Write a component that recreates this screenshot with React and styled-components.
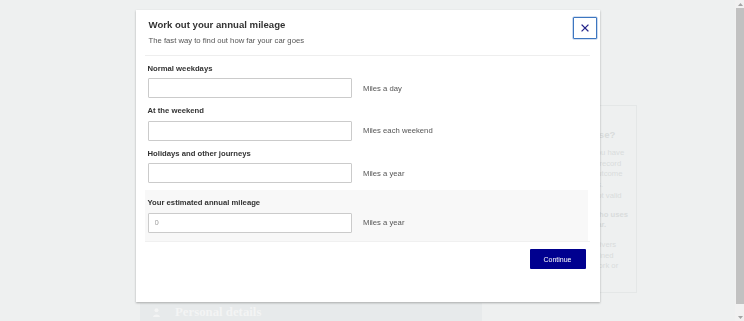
import React from 'react';
import styled, { createGlobalStyle } from 'styled-components';

const GlobalStyle = createGlobalStyle`
  html, body { margin: 0; padding: 0; }
  body {
    background: #eef0f0;
    font-family: "Liberation Sans", Arial, sans-serif;
    overflow: hidden;
  }
  * { box-sizing: border-box; }
`;

/* ---------- background page (behind the dialog) ---------- */

const Page = styled.div`
  display: grid;
  grid-template-columns: 342px 77px;
  column-gap: 78px;
  padding-left: 140px;
  height: 321px;
  overflow: hidden;
`;

const MainColumn = styled.main`
  padding-top: 303px;
`;

const StepBar = styled.div`
  display: flex;
  align-items: center;
  gap: 15px;
  height: 18px;
  padding-left: 13px;
  background: #e7eaeb;
  color: #f3f4f4;
  font-family: "Liberation Serif", "Times New Roman", serif;
  font-weight: 700;
  font-size: 12.8px;
`;

const Sidebar = styled.aside`
  padding-top: 105px;
`;

const InfoCard = styled.div`
  height: 188px;
  border: 1px solid #e4e7e7;
  padding: 22px 4px 0 32px;
  color: #d9dcdc;
  font-size: 7.7px;
  line-height: 10.7px;
  white-space: nowrap;
  overflow: hidden;
`;

const InfoTitle = styled.div`
  font-size: 9.6px;
  font-weight: 700;
  line-height: 13px;
  margin-bottom: 7px;
`;

const InfoPara = styled.p`
  margin: 0 0 ${p => p.$gap || 8}px;
  font-weight: ${p => (p.$strong ? 700 : 400)};
`;

/* ---------- scrollbar ---------- */

const ScrollTrack = styled.div`
  position: fixed;
  top: 0;
  right: 0;
  bottom: 0;
  width: 9px;
  background: #f1f1f1;
  display: flex;
  flex-direction: column;
  align-items: stretch;
`;

const ScrollArrow = styled.div`
  height: 8px;
  display: flex;
  align-items: center;
  justify-content: center;
  padding-left: 1px;
`;

const ScrollThumb = styled.div`
  flex: 1;
  margin: 0 0 9px 1px;
  background: #c1c1c1;
`;

/* ---------- dialog ---------- */

const Overlay = styled.div`
  position: fixed;
  top: 0;
  left: 0;
  right: 9px;
  bottom: 0;
  display: flex;
  justify-content: center;
  align-items: flex-start;
  padding-top: 10px;
`;

const Dialog = styled.div`
  position: relative;
  width: 464px;
  background: #fff;
  box-shadow: 0 1px 2px rgba(0, 0, 0, 0.3);
  padding: 0 10px 33px 9px;
`;

const Header = styled.header`
  padding: 9px 0 9px 4px;
  border-bottom: 1px solid #eeeeee;
`;

const Title = styled.h2`
  margin: 0;
  font-size: 9.6px;
  line-height: 12px;
  font-weight: 700;
  color: #333;
`;

const Subtitle = styled.p`
  margin: 5px 0 0;
  font-size: 7.7px;
  line-height: 10px;
  color: #555;
`;

const CloseButton = styled.button`
  position: absolute;
  top: 7px;
  right: 3px;
  width: 24px;
  height: 22px;
  padding: 0;
  display: flex;
  align-items: center;
  justify-content: center;
  background: #fff;
  border: 1px solid #3d76c0;
  box-shadow: 0 0 0 0.6px rgba(61, 118, 192, 0.45);
  border-radius: 1px;
  cursor: pointer;
`;

const Body = styled.div`
  padding-top: 7.5px;
`;

const FieldGroup = styled.div`
  padding-left: 3px;
  margin-bottom: ${p => (p.$last ? 0 : 8)}px;
`;

const Label = styled.label`
  display: block;
  font-size: 7.7px;
  line-height: 10px;
  font-weight: 700;
  color: #333;
  margin-bottom: 4.5px;
`;

const InputRow = styled.div`
  display: flex;
  align-items: center;
`;

const TextInput = styled.input`
  width: 204px;
  height: 20px;
  border: 1px solid #cbcbcb;
  border-radius: 1px;
  background: #fff;
  padding: 0 6px;
  font-family: inherit;
  font-size: 7.7px;
  color: ${p => (p.$muted ? '#9a9a9a' : '#333')};
  outline: none;
`;

const Suffix = styled.span`
  margin-left: 11.5px;
  font-size: 7.7px;
  color: #555;
`;

const EstimateWrap = styled.div`
  margin-top: 7px;
  border-bottom: 1px solid #f0f0f0;
`;

const EstimateBox = styled.div`
  background: #f8f8f8;
  margin: 0 2px 0 0;
  padding: 8px 0 8px 0;
`;

const Footer = styled.div`
  display: flex;
  justify-content: flex-end;
  padding: 7.5px 4px 0 0;
`;

const PrimaryButton = styled.button`
  width: 56px;
  height: 20px;
  border: none;
  border-radius: 1px;
  background: #00008f;
  color: #fff;
  font-family: inherit;
  font-size: 7px;
  cursor: pointer;
`;

const fields = [
  { label: 'Normal weekdays', suffix: 'Miles a day' },
  { label: 'At the weekend', suffix: 'Miles each weekend' },
  { label: 'Holidays and other journeys', suffix: 'Miles a year' },
];

const PersonIcon = () => (
  <svg width="7" height="9" viewBox="0 0 7 9" fill="currentColor">
    <circle cx="3.5" cy="2.2" r="2" />
    <path d="M0 9 C0 5.6 7 5.6 7 9 Z" />
  </svg>
);

const CloseIcon = () => (
  <svg width="8" height="8" viewBox="0 0 8 8" fill="none" stroke="#24248a" strokeWidth="1.2" strokeLinecap="square">
    <path d="M1 1 L7 7 M7 1 L1 7" />
  </svg>
);

const Arrow = ({ up }) => (
  <svg width="5" height="3" viewBox="0 0 5 3" fill="#a3a3a3">
    <path d={up ? 'M0 3 L2.5 0 L5 3 Z' : 'M0 0 L2.5 3 L5 0 Z'} />
  </svg>
);

export default function App() {
  return (
    <>
      <GlobalStyle />
      <Page>
        <MainColumn>
          <StepBar>
            <PersonIcon />
            <span>Personal details</span>
          </StepBar>
        </MainColumn>
        <Sidebar>
          <InfoCard>
            <InfoTitle>use?</InfoTitle>
            <InfoPara>
              you have<br />
              a record<br />
              outcome<br />
              us.<br />
              not valid
            </InfoPara>
            <InfoPara $strong $gap={9}>
              who uses<br />
              car.
            </InfoPara>
            <InfoPara>
              drivers<br />
              joined<br />
              work or
            </InfoPara>
          </InfoCard>
        </Sidebar>
      </Page>

      <ScrollTrack>
        <ScrollArrow><Arrow up /></ScrollArrow>
        <ScrollThumb />
        <ScrollArrow><Arrow /></ScrollArrow>
      </ScrollTrack>

      <Overlay>
        <Dialog role="dialog" aria-labelledby="mileage-title">
          <Header>
            <Title id="mileage-title">Work out your annual mileage</Title>
            <Subtitle>The fast way to find out how far your car goes</Subtitle>
          </Header>
          <CloseButton aria-label="Close">
            <CloseIcon />
          </CloseButton>
          <Body>
            {fields.map((f, i) => (
              <FieldGroup key={f.label} $last={i === fields.length - 1}>
                <Label>{f.label}</Label>
                <InputRow>
                  <TextInput type="text" />
                  <Suffix>{f.suffix}</Suffix>
                </InputRow>
              </FieldGroup>
            ))}
            <EstimateWrap>
              <EstimateBox>
                <FieldGroup $last>
                  <Label>Your estimated annual mileage</Label>
                  <InputRow>
                    <TextInput type="text" value="0" readOnly $muted />
                    <Suffix>Miles a year</Suffix>
                  </InputRow>
                </FieldGroup>
              </EstimateBox>
            </EstimateWrap>
          </Body>
          <Footer>
            <PrimaryButton>Continue</PrimaryButton>
          </Footer>
        </Dialog>
      </Overlay>
    </>
  );
}
